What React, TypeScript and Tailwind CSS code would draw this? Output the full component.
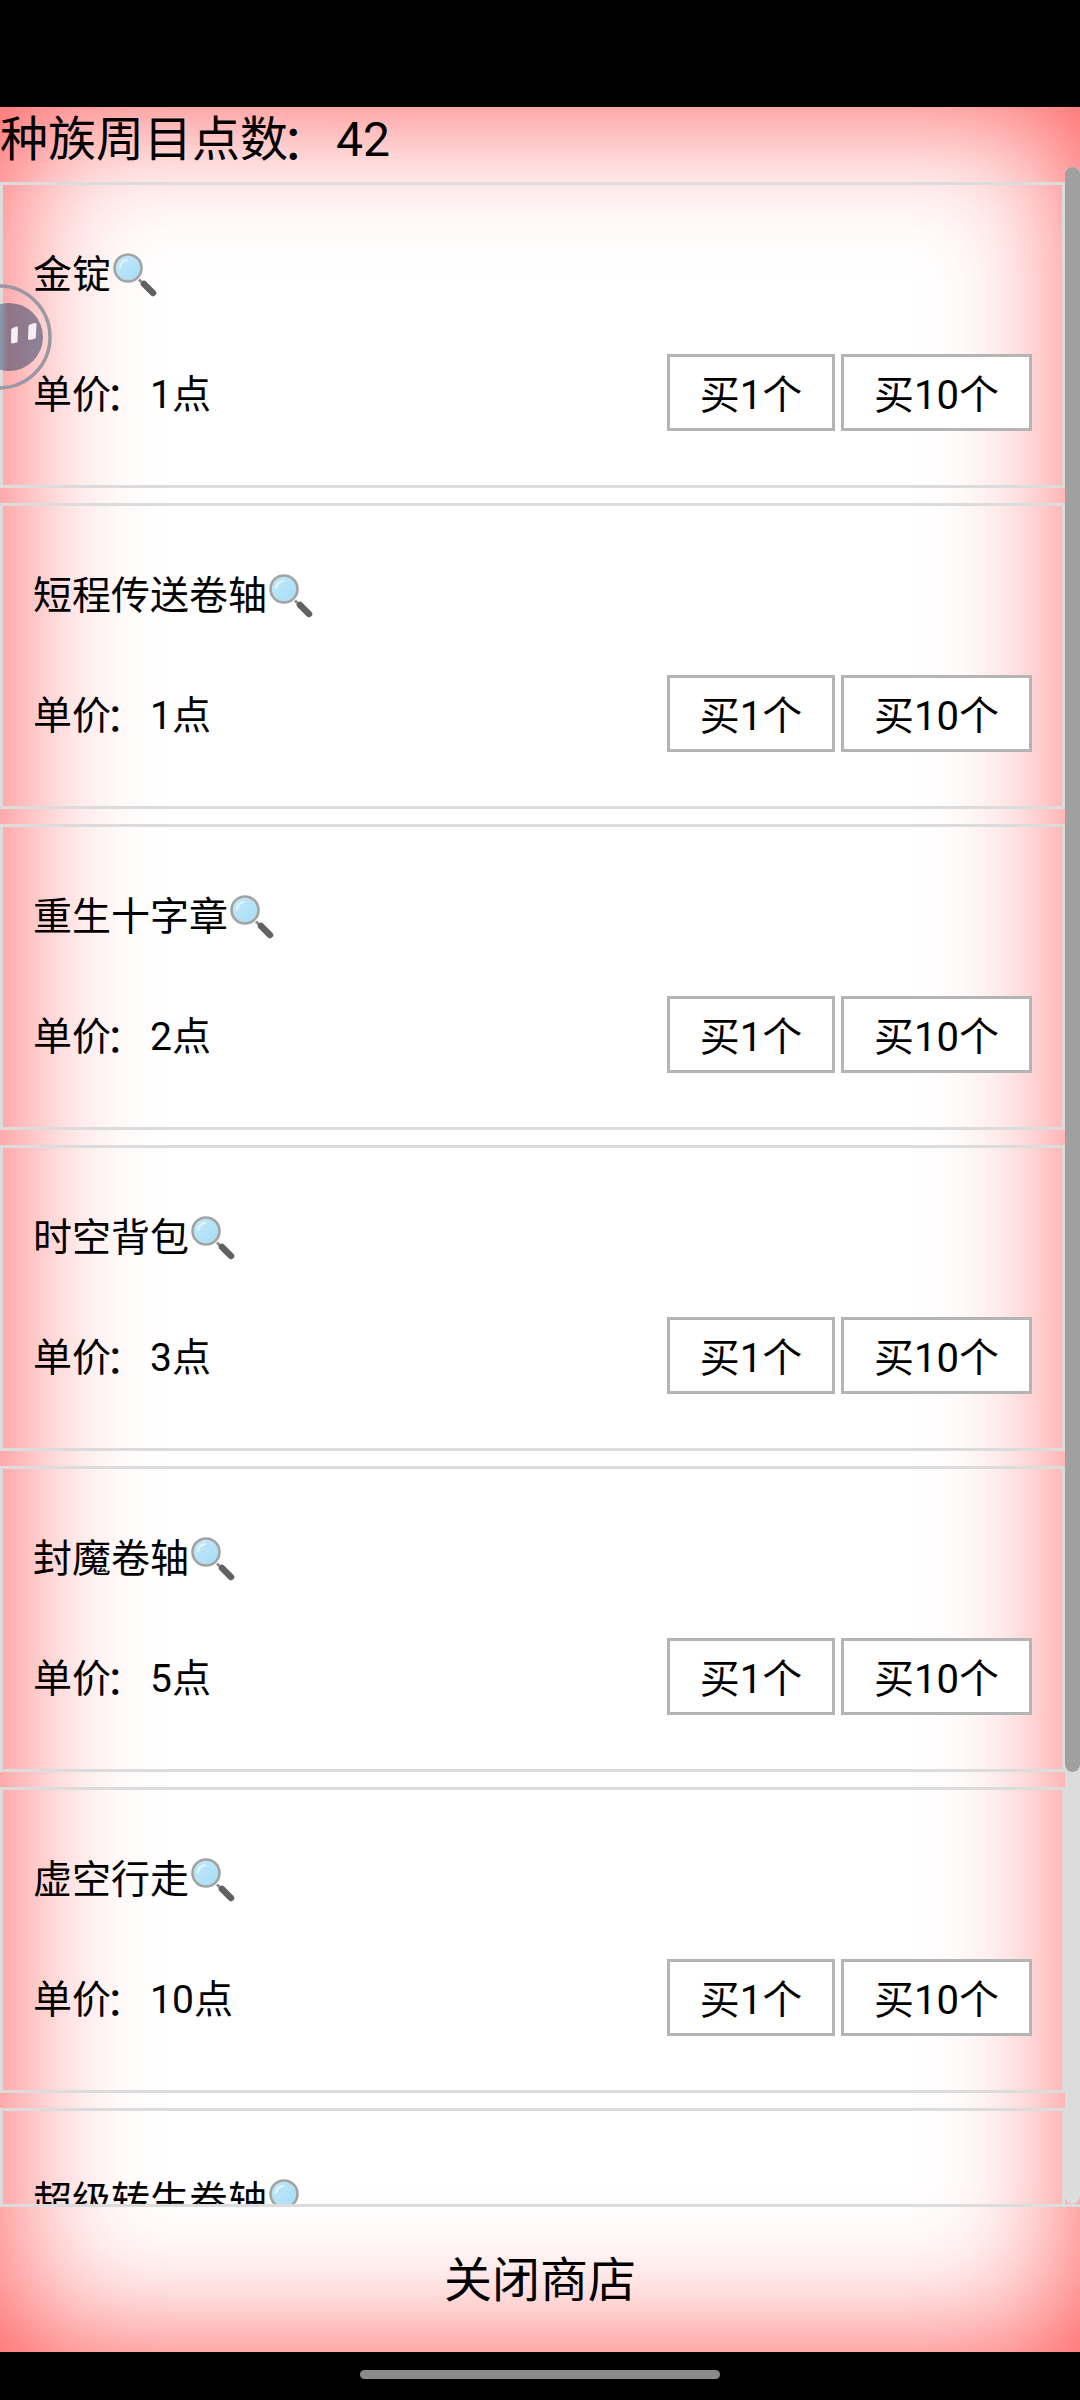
import React from "react";

const items = [
  { name: "金锭", price: 1 },
  { name: "短程传送卷轴", price: 1 },
  { name: "重生十字章", price: 2 },
  { name: "时空背包", price: 3 },
  { name: "封魔卷轴", price: 5 },
  { name: "虚空行走", price: 10 },
  { name: "超级转生卷轴", price: 20 },
  { name: "神圣祝福", price: 50 },
];

// Simplified Chinese punctuation: the full-width colon sits low and to the left of its cell.
function Colon() {
  return <span className="inline-block -translate-x-[0.14em] translate-y-[0.06em]">：</span>;
}

function Magnifier() {
  return (
    <svg viewBox="0 0 44 44" className="ml-[2px] mt-[3px] h-[44px] w-[44px] shrink-0">
      <defs>
        <linearGradient id="lens" x1="0" y1="0" x2="1" y2="1">
          <stop offset="0" stopColor="#c4e9fb" />
          <stop offset="1" stopColor="#a6dcf5" />
        </linearGradient>
      </defs>
      <path d="M26 26.5 L31 31.5" stroke="#8f8f8f" strokeWidth="3" />
      <path d="M31 31 L40 40" stroke="#616161" strokeWidth="6.5" strokeLinecap="round" />
      <circle cx="15" cy="15" r="13.5" fill="url(#lens)" stroke="#a3a3a3" strokeWidth="2.6" />
      <path d="M7 14 A8.5 8.5 0 0 1 14 7" fill="none" stroke="#e6f6fd" strokeWidth="2" strokeLinecap="round" />
    </svg>
  );
}

function BuyButton({ label, width }: { label: string; width: string }) {
  return (
    <button className={`h-[77px] ${width} border-[3px] border-[#b4b4b4] bg-white pt-[6px] text-[40px] leading-[65px] text-black`}>
      {label}
    </button>
  );
}

function ShopItem({ name, price }: { name: string; price: number }) {
  return (
    <div className="mt-[15px] h-[306px] border-[3px] border-[#dcdcdc] px-[30px] pb-[54px] pt-[58px] text-[39px] text-black">
      <div className="flex h-[60px] items-center leading-[60px]">
        <span className="pt-[3px]">{name}</span>
        <Magnifier />
      </div>
      <div className="mt-[51px] flex h-[77px] items-center justify-between">
        <span className="pt-[6px]">
          单价
          <Colon />
          {price}点
        </span>
        <div className="flex gap-[6px]">
          <BuyButton label="买1个" width="w-[168px]" />
          <BuyButton label="买10个" width="w-[191px]" />
        </div>
      </div>
    </div>
  );
}

function FloatingBall() {
  return (
    <svg viewBox="0 0 60 110" className="absolute left-0 top-[282px] h-[110px] w-[60px]">
      <defs>
        <linearGradient id="disc" gradientUnits="userSpaceOnUse" x1="0" y1="0" x2="43" y2="0">
          <stop offset="0" stopColor="#8a9aae" />
          <stop offset="0.18" stopColor="#8f7585" />
          <stop offset="1" stopColor="#8e8299" />
        </linearGradient>
      </defs>
      <circle cx="-1" cy="55" r="51" fill="none" stroke="#9a98a6" strokeWidth="3.5" />
      <circle cx="9" cy="55" r="34" fill="url(#disc)" />
      <path d="M12.5 46 L16.5 44.5 Q18 44 18 46 L17.5 59.5 Q17.5 60.5 16 60.8 L12.5 61.4 Q11 61.5 11 60 L11.3 47.5 Q11.3 46.5 12.5 46 Z" fill="#f6eef0" />
      <path d="M30 42.5 L34.5 41 Q36.5 40.5 36.5 42.5 L35.8 55.5 Q35.8 56.5 34.5 56.8 L29.8 58 Q28 58.3 28 56.5 L28.5 44 Q28.5 43 30 42.5 Z" fill="#f6eef0" />
    </svg>
  );
}

export default function App() {
  return (
    <div
      lang="zh-CN"
      className="relative flex h-[2400px] w-[1080px] flex-col overflow-hidden bg-black font-['Roboto','Noto_Sans_CJK_SC',sans-serif]"
    >
      <div className="h-[107px] shrink-0 bg-black" />
      <main className="flex h-[2245px] shrink-0 flex-col bg-white shadow-[inset_0_0_140px_rgba(255,0,0,0.7)]">
        <header className="h-[60px] shrink-0 pt-[6px] text-[48px] leading-[54px] text-black">
          种族周目点数
          <Colon />
          42
        </header>
        <div className="flex h-[2037px] shrink-0">
          <div className="min-w-0 flex-1 overflow-hidden">
            {items.map((item) => (
              <ShopItem key={item.name} name={item.name} price={item.price} />
            ))}
          </div>
          <div className="w-[15px] shrink-0 rounded-[8px] bg-[#dcdcdc]">
            <div className="h-[1605px] rounded-[8px] bg-[#a0a0a0]" />
          </div>
        </div>
        <button className="flex h-[148px] w-full shrink-0 items-center justify-center border-t-[3px] border-[#dcdcdc] pt-[2px] text-[48px] text-black">
          关闭商店
        </button>
      </main>
      <div className="flex h-[48px] shrink-0 items-start justify-center bg-black pt-[18px]">
        <div className="h-[9px] w-[360px] rounded-full bg-[#8a8a8a]" />
      </div>
      <FloatingBall />
    </div>
  );
}
